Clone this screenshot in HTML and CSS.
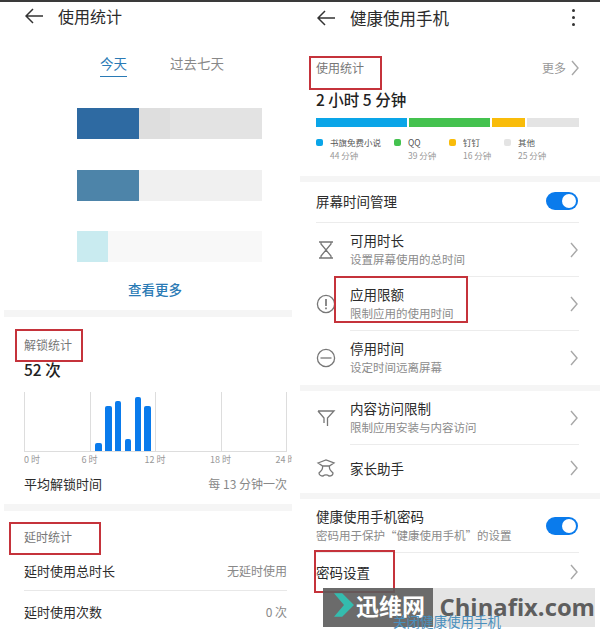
FILE: index.html
```html
<!DOCTYPE html>
<html lang="zh-CN">
<head>
  <meta charset="UTF-8" />
  <meta name="viewport" content="width=device-width, initial-scale=1.0"/>
  <title>健康使用手机</title>
  <link rel="stylesheet" href="styles.css">
</head>
<body>
  <svg class="sprites" width="0" height="0">
    <symbol id="back" viewBox="0 0 18 16"><path d="M8 1 L1 8 L8 15 M1 8 H18" fill="none" stroke="#333" stroke-width="1.5"/></symbol>
    <symbol id="chev" viewBox="0 0 8 16"><path d="M1 1 L7 8 L1 15" fill="none" stroke="#a8a8a8" stroke-width="1.4"/></symbol>
  </svg>

  <div class="page">
    <!-- left phone -->
    <div class="phone phone-left">
      <section class="card stats-top">
        <header class="bar">
          <svg class="back"><use href="#back"/></svg>
          <span class="bar-title">使用统计</span>
        </header>
        <div class="tabs">
          <span class="tab active">今天</span>
          <span class="tab">过去七天</span>
        </div>
        <div class="usage-list">
          <div class="usage usage-1"><div class="usage-fill"></div></div>
          <div class="usage usage-2"><div class="usage-fill"></div></div>
          <div class="usage usage-3"><div class="usage-fill"></div></div>
        </div>
        <div class="see-more">查看更多</div>
      </section>

      <section class="card unlock">
        <div class="label">解锁统计</div>
        <div class="big">52 次</div>
        <div class="chart">
          <div class="chart-cell"></div>
          <div class="chart-cell bars">
            <i class="bar-col" style="height:8px"></i>
            <i class="bar-col" style="height:45px"></i>
            <i class="bar-col" style="height:50px"></i>
            <i class="bar-col" style="height:12px"></i>
            <i class="bar-col" style="height:54px"></i>
            <i class="bar-col" style="height:45px"></i>
          </div>
          <div class="chart-cell"></div>
          <div class="chart-cell"></div>
        </div>
        <div class="axis">
          <span>0 时</span><span>6 时</span><span>12 时</span><span>18 时</span><span>24 时</span>
        </div>
        <div class="kv kv-avg"><span class="k">平均解锁时间</span><span class="v">每 13 分钟一次</span></div>
      </section>

      <section class="card delay">
        <div class="label">延时统计</div>
        <div class="kv kv-line"><span class="k">延时使用总时长</span><span class="v">无延时使用</span></div>
        <div class="kv"><span class="k">延时使用次数</span><span class="v">0 次</span></div>
      </section>

      <div class="mark mark-unlock"></div>
      <div class="mark mark-delay"></div>
    </div>

    <!-- right phone -->
    <div class="phone phone-right">
      <section class="card summary">
        <header class="bar">
          <svg class="back"><use href="#back"/></svg>
          <span class="bar-title">健康使用手机</span>
          <span class="dots"><i></i><i></i><i></i></span>
        </header>
        <div class="summary-head">
          <span class="label">使用统计</span>
          <span class="more">更多<svg class="chev"><use href="#chev"/></svg></span>
        </div>
        <div class="big">2 小时 5 分钟</div>
        <div class="stack">
          <i class="seg seg-blue"></i><i class="seg seg-green"></i><i class="seg seg-gold"></i><i class="seg seg-gray"></i>
        </div>
        <div class="legend">
          <div class="legend-item li-1"><i class="dot seg-blue"></i><div>书旗免费小说<small>44 分钟</small></div></div>
          <div class="legend-item li-2"><i class="dot seg-green"></i><div>QQ<small>39 分钟</small></div></div>
          <div class="legend-item li-3"><i class="dot seg-gold"></i><div>钉钉<small>16 分钟</small></div></div>
          <div class="legend-item"><i class="dot seg-gray"></i><div>其他<small>25 分钟</small></div></div>
        </div>
      </section>

      <section class="card">
        <div class="row row-plain row-toggle line">
          <span class="row-title">屏幕时间管理</span>
          <span class="toggle"></span>
        </div>
        <div class="row">
          <svg class="ico" viewBox="0 0 20 20"><path d="M3 2 H17 M3 18 H17 M5 2 L5 4 L15 16 L15 18 M15 2 L15 4 L5 16 L5 18" fill="none" stroke="#777" stroke-width="1.3"/></svg>
          <div class="row-body line">
            <div class="row-text"><div class="row-title">可用时长</div><div class="row-sub">设置屏幕使用的总时间</div></div>
            <svg class="chev"><use href="#chev"/></svg>
          </div>
        </div>
        <div class="row">
          <svg class="ico" viewBox="0 0 20 20"><circle cx="10" cy="10" r="8.6" fill="none" stroke="#777" stroke-width="1.3"/><path d="M10 5 V12 M10 13.6 V15.2" stroke="#666" stroke-width="1.5"/></svg>
          <div class="row-body line">
            <div class="row-text"><div class="row-title">应用限额</div><div class="row-sub">限制应用的使用时间</div></div>
            <svg class="chev"><use href="#chev"/></svg>
          </div>
        </div>
        <div class="row">
          <svg class="ico" viewBox="0 0 20 20"><circle cx="10" cy="10" r="8.6" fill="none" stroke="#777" stroke-width="1.3"/><path d="M4.5 10 H15.5" stroke="#777" stroke-width="1.3"/></svg>
          <div class="row-body">
            <div class="row-text"><div class="row-title">停用时间</div><div class="row-sub">设定时间远离屏幕</div></div>
            <svg class="chev"><use href="#chev"/></svg>
          </div>
        </div>
      </section>

      <section class="card">
        <div class="row">
          <svg class="ico" viewBox="0 0 20 20"><path d="M2 3 H18 L11.5 10 V18 M2 3 L8 10 V15" fill="none" stroke="#777" stroke-width="1.3"/></svg>
          <div class="row-body line">
            <div class="row-text"><div class="row-title">内容访问限制</div><div class="row-sub">限制应用安装与内容访问</div></div>
            <svg class="chev"><use href="#chev"/></svg>
          </div>
        </div>
        <div class="row row-short">
          <svg class="ico" viewBox="0 0 20 20"><path d="M2 5 L10 2 L18 5 L13.5 8 C13 11 14 12 17 15 C17 17 15 18 13 18 C11.5 16.5 8.5 16.5 7 18 C5 18 3 17 3 15 C6 12 7 11 6.5 8 Z M6.5 8 H13.5" fill="none" stroke="#777" stroke-width="1.3"/></svg>
          <div class="row-body">
            <div class="row-text"><div class="row-title">家长助手</div></div>
            <svg class="chev"><use href="#chev"/></svg>
          </div>
        </div>
      </section>

      <section class="card card-last">
        <div class="row row-plain line">
          <div class="row-text"><div class="row-title">健康使用手机密码</div><div class="row-sub">密码用于保护“健康使用手机”的设置</div></div>
          <span class="toggle"></span>
        </div>
        <div class="row row-plain row-pass">
          <span class="row-title">密码设置</span>
          <svg class="chev"><use href="#chev"/></svg>
        </div>
        <div class="close-link">关闭健康使用手机</div>
      </section>

      <div class="mark mark-stats"></div>
      <div class="mark mark-limit"></div>
      <div class="mark mark-pass"></div>
    </div>
  </div>

  <div class="watermark">
    <div class="wm-dark">
      <svg class="wm-arrow" viewBox="0 0 22 26"><path d="M0 0 H9 L22 13 L9 26 H0 L11 13 Z" fill="#1fb5a6"/></svg>
      <span>迅维网</span>
    </div>
    <div class="wm-light">Chinafix.com</div>
  </div>
</body>
</html>
```

FILE: styles.css
```css
* {
  box-sizing: border-box;
}

body {
  margin: 0;
  width: 600px;
  height: 632px;
  overflow: hidden;
  position: relative;
  background: #fff;
  color: #2b2b2b;
  font-family: "Noto Sans CJK SC", "Liberation Sans", sans-serif;
}

.sprites {
  position: absolute;
}

.page {
  display: flex;
  height: 632px;
  border-top: 2px solid #3a3a3a;
}

.phone {
  position: relative;
  display: flex;
  flex-direction: column;
  overflow: hidden;
}

.phone-left {
  width: 288px;
  margin-left: 4px;
  gap: 7px;
  background: #f5f5f5;
}

.phone-right {
  width: 300px;
  margin-left: 8px;
  gap: 6px;
  background: #f5f5f5;
}

.card {
  background: #fff;
}

/* top bars */
.bar {
  display: flex;
  align-items: center;
  height: 28px;
}

.back {
  width: 18px;
  height: 16px;
  margin-left: 21px;
}

.bar-title {
  margin-left: 15px;
  font-size: 16px;
}

.phone-right .bar {
  height: 31px;
}

.phone-right .back {
  margin-left: 17px;
}

.phone-right .bar-title {
  margin-left: 15px;
  font-size: 16.5px;
}

.dots {
  margin-left: auto;
  margin-right: 25px;
  display: flex;
  flex-direction: column;
  gap: 4px;
}

.dots i {
  width: 3px;
  height: 3px;
  border-radius: 50%;
  background: #333;
}

/* left: usage */
.stats-top {
  height: 309px;
}

.tabs {
  display: flex;
  gap: 43px;
  margin: 23px 0 0 96px;
  font-size: 13.5px;
  color: #888;
}

.tab {
  height: 24px;
  line-height: 20px;
}

.tab.active {
  color: #2a7ab5;
  border-bottom: 1px solid #2a7ab5;
}

.usage-list {
  display: flex;
  flex-direction: column;
  gap: 30.5px;
  margin: 31px 0 0 73px;
}

.usage {
  width: 185px;
  height: 31px;
  display: flex;
}

.usage-fill {
  width: 62px;
}

.usage-1 {
  background: linear-gradient(to right, #dedede 93px, #e3e3e3 93px);
}

.usage-1 .usage-fill {
  background: #2e6aa2;
}

.usage-2 {
  background: #f0f0f0;
}

.usage-2 .usage-fill {
  background: #4d84a9;
}

.usage-3 {
  background: #f8f8f8;
}

.usage-3 .usage-fill {
  width: 31px;
  background: #c9ebf0;
}

.see-more {
  margin: 17px 0 0 124px;
  font-size: 13.5px;
  font-weight: 500;
  color: #2a7ab5;
}

/* left: unlock */
.label {
  font-size: 12px;
  color: #777;
}

.unlock {
  height: 187px;
  padding: 19px 5px 0 20px;
}

.unlock .big {
  margin-top: 5px;
}

.big {
  font-size: 15.5px;
  font-weight: 500;
  line-height: 22px;
  color: #222;
}

.chart {
  display: grid;
  grid-template-columns: repeat(4, 65.5px);
  width: 263px;
  height: 60px;
  margin-top: 12px;
  border-right: 1px solid #ddd;
  border-bottom: 1px solid #ddd;
}

.chart-cell {
  border-left: 1px solid #ddd;
}

.bars {
  display: flex;
  align-items: flex-end;
  gap: 3.2px;
  padding-left: 4.5px;
}

.bar-col {
  width: 6.7px;
  background: #0a7bec;
  border-radius: 2px 2px 0 0;
}

.axis {
  display: grid;
  grid-template-columns: repeat(5, 65.5px);
  margin-top: 1px;
  font-size: 9px;
  line-height: 14px;
  color: #999;
  white-space: nowrap;
}

.axis span {
  transform: translateX(-50%);
  justify-self: start;
}

.axis span:first-child {
  transform: none;
}

.kv {
  display: flex;
  justify-content: space-between;
  align-items: center;
  height: 41px;
  font-size: 13px;
}

.kv .v {
  font-size: 12px;
  color: #888;
}

.kv-avg {
  height: 33px;
}

.delay {
  flex: 1;
  padding: 17px 5px 0 20px;
}

.kv-line {
  margin-top: 6px;
  height: 40px;
  border-bottom: 1px solid #e8e8e8;
}

/* right: summary */
.summary {
  height: 174px;
  padding-bottom: 0;
}

.summary-head {
  display: flex;
  justify-content: space-between;
  align-items: center;
  margin: 26px 21px 0 16px;
}

.more {
  display: flex;
  align-items: center;
  gap: 5px;
  font-size: 12px;
  color: #999;
}

.summary .big {
  margin: 12px 0 0 16px;
}

.stack {
  display: flex;
  gap: 2px;
  margin: 8px 21px 0 16px;
  height: 9px;
}

.seg {
  display: block;
}

.seg-blue {
  background: #0aa5e8;
}

.seg-green {
  background: #44c24f;
}

.seg-gold {
  background: #f9bc0a;
}

.seg-gray {
  background: #e4e4e4;
}

.stack .seg-blue {
  width: 91px;
}

.stack .seg-green {
  width: 81px;
}

.stack .seg-gold {
  width: 33px;
}

.stack .seg-gray {
  width: 52px;
}

.legend {
  display: flex;
  margin: 9px 0 0 16px;
  font-size: 8.5px;
  line-height: 13px;
  color: #555;
}

.legend-item {
  display: flex;
  gap: 7px;
  width: 55px;
}

.li-1 {
  width: 78px;
}

.dot {
  width: 7px;
  height: 7px;
  margin-top: 3px;
  border-radius: 2px;
}

.legend small {
  display: block;
  font-size: 8.5px;
  color: #999;
}

/* right: rows */
.row {
  display: flex;
  align-items: center;
  height: 54px;
  padding: 0 21px 0 16px;
}

.row-short {
  height: 48px;
  padding-bottom: 2px;
}

.row-plain {
  justify-content: space-between;
  margin: 0 21px 0 16px;
  padding: 0;
}

.row-toggle {
  height: 41px;
  padding-bottom: 2px;
}

.row-pass {
  height: 40px;
  padding-bottom: 2px;
}

.line {
  border-bottom: 1px solid #ececec;
}

.ico {
  flex: none;
  width: 20px;
  height: 20px;
  margin-right: 14px;
}

.row-body {
  flex: 1;
  align-self: stretch;
  display: flex;
  align-items: center;
  justify-content: space-between;
}

.row-title {
  font-size: 13.5px;
  line-height: 19px;
}

.row-sub {
  font-size: 11.5px;
  line-height: 19px;
  color: #8b8b8b;
}

.chev {
  flex: none;
  width: 8px;
  height: 16px;
  margin-right: 1px;
}

.more .chev {
  margin-right: 0;
}

.toggle {
  position: relative;
  width: 32px;
  height: 18px;
  margin-right: 1px;
  border-radius: 9px;
  background: #0a7bec;
}

.toggle::after {
  content: "";
  position: absolute;
  top: 2px;
  right: 2px;
  width: 14px;
  height: 14px;
  border-radius: 50%;
  background: #fff;
}

.card-last {
  flex: 1;
}

.close-link {
  position: relative;
  z-index: 2;
  margin-top: 19px;
  padding-left: 93px;
  font-size: 13.5px;
  line-height: 19px;
  color: #4a8fbd;
}

/* red annotation boxes */
.mark {
  position: absolute;
  border: 2px solid #c5333b;
}

.mark-unlock {
  left: 11px;
  top: 327px;
  width: 68px;
  height: 33px;
}

.mark-delay {
  left: 5px;
  top: 520px;
  width: 92px;
  height: 33px;
}

.mark-stats {
  left: 9px;
  top: 54px;
  width: 73px;
  height: 34px;
}

.mark-limit {
  left: 34px;
  top: 274px;
  width: 134px;
  height: 47px;
}

.mark-pass {
  left: 14px;
  top: 548px;
  width: 81px;
  height: 43px;
}

/* watermark over the bottom right corner */
.watermark {
  position: absolute;
  z-index: 1;
  left: 323px;
  top: 588px;
  width: 272px;
  height: 39px;
  display: flex;
  opacity: 0.9;
}

.wm-dark {
  display: flex;
  align-items: center;
  gap: 2px;
  width: 110px;
  padding: 0 0 5px 11px;
  background: #5c5c5c;
  color: #fff;
  font-size: 23px;
  font-weight: 700;
}

.wm-arrow {
  flex: none;
  width: 20px;
  height: 24px;
}

.wm-light {
  flex: 1;
  padding-left: 7px;
  background: #e2e2e2;
  color: #4d4d4d;
  font-family: "Open Sans", "Liberation Sans", sans-serif;
  font-size: 23.8px;
  font-weight: 700;
  line-height: 39px;
  white-space: nowrap;
}
```
